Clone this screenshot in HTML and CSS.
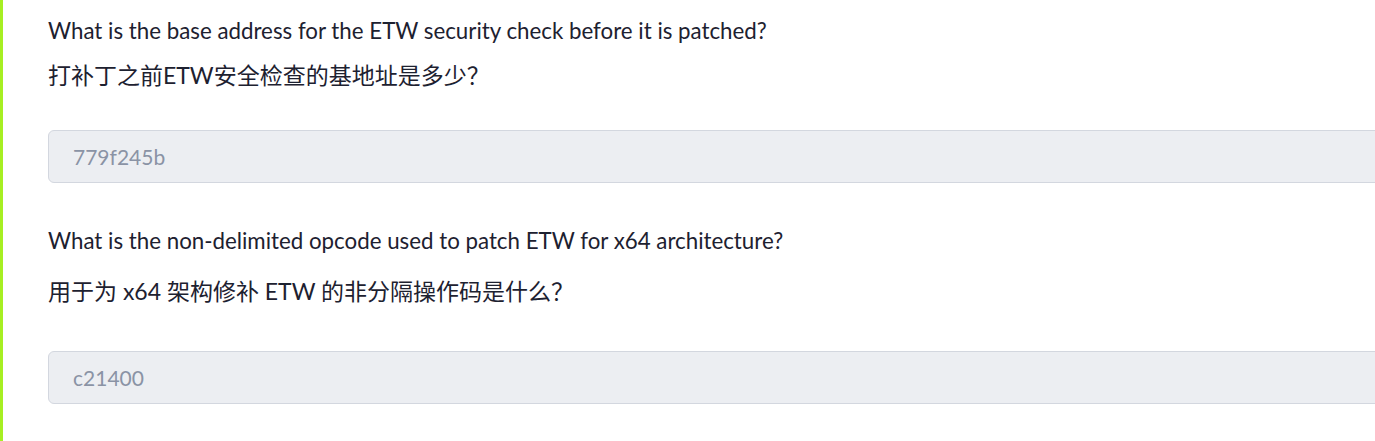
FILE: index.html
```html
<!DOCTYPE html>
<html lang="zh">
<head>
<meta charset="utf-8">
<link rel="stylesheet" href="styles.css">
</head>
<body>
<div class="page">
  <section class="question first">
    <p class="q-en">What is the base address for the ETW security check before it is patched?</p>
    <p class="q-zh q-zh-1">打补丁之前ETW安全检查的基地址是多少？</p>
    <div class="answer">779f245b</div>
  </section>
  <section class="question second">
    <p class="q-en">What is the non-delimited opcode used to patch ETW for x64 architecture?</p>
    <p class="q-zh q-zh-2">用于为 x64 架构修补 ETW 的非分隔操作码是什么？</p>
    <div class="answer">c21400</div>
  </section>
</div>
</body>
</html>
```
FILE: styles.css
```css
html, body {
  margin: 0;
  padding: 0;
  background: #ffffff;
  overflow: hidden;
}
body {
  width: 1375px;
  height: 441px;
  font-family: "Lato", "Noto Sans CJK SC", sans-serif;
  color: #1d2130;
}
.page {
  border-left: 3px solid #a6ef22;
  height: 441px;
  padding-left: 45px;
  box-sizing: border-box;
}
.question {
  display: flex;
  flex-direction: column;
  width: 1360px;
}
.q-en {
  margin: 0;
  font-size: 22.3px;
  line-height: 30px;
}
.q-zh {
  margin: 0;
  font-size: 23px;
  line-height: 30px;
}
.first { padding-top: 16px; }
.q-zh-1 { margin-top: 14px; }
.second { margin-top: 43px; }
.q-zh-2 { margin-top: 20px; }
.answer {
  margin-top: 40px;
  height: 53px;
  box-sizing: border-box;
  border: 1px solid #d3d7df;
  border-radius: 6px;
  background: #eceef2;
  padding-left: 24px;
  display: flex;
  align-items: center;
  font-size: 21px;
  color: #8a93a5;
}
.second .answer { margin-top: 45px; }
```
